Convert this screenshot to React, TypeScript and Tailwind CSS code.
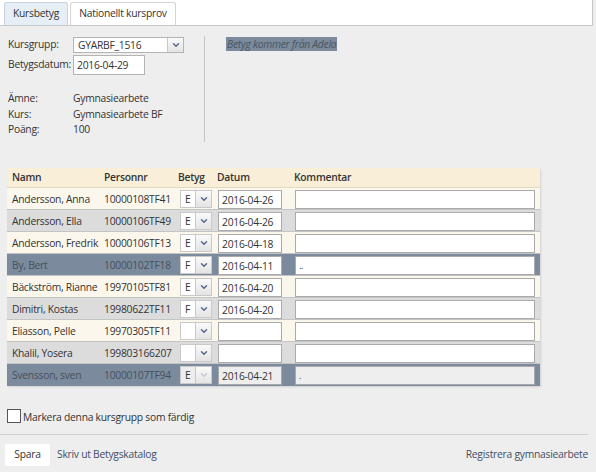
import { ChevronDown } from 'lucide-react';

type Row = {
  name: string;
  pnr: string;
  grade: string;
  date: string;
  comment: string;
  tone: 'cream' | 'gray' | 'dark' | 'locked';
};

const rows: Row[] = [
  { name: 'Andersson, Anna', pnr: '10000108TF41', grade: 'E', date: '2016-04-26', comment: '', tone: 'cream' },
  { name: 'Andersson, Ella', pnr: '10000106TF49', grade: 'E', date: '2016-04-26', comment: '', tone: 'gray' },
  { name: 'Andersson, Fredrik', pnr: '10000106TF13', grade: 'E', date: '2016-04-18', comment: '', tone: 'cream' },
  { name: 'By, Bert', pnr: '10000102TF18', grade: 'F', date: '2016-04-11', comment: '..', tone: 'dark' },
  { name: 'Bäckström, Rianne', pnr: '19970105TF81', grade: 'E', date: '2016-04-20', comment: '', tone: 'cream' },
  { name: 'Dimitri, Kostas', pnr: '19980622TF11', grade: 'F', date: '2016-04-20', comment: '', tone: 'gray' },
  { name: 'Eliasson, Pelle', pnr: '19970305TF11', grade: '', date: '', comment: '', tone: 'cream' },
  { name: 'Khalil, Yosera', pnr: '199803166207', grade: '', date: '', comment: '', tone: 'gray' },
  { name: 'Svensson, sven', pnr: '10000107TF94', grade: 'E', date: '2016-04-21', comment: '.', tone: 'locked' },
];

const rowBg = {
  cream: 'bg-[#fcf7ec] text-[#333]',
  gray: 'bg-[#dcdcdc] text-[#333]',
  dark: 'bg-[#7b8b9d] text-[#46505b]',
  locked: 'bg-[#7b8b9d] text-[#46505b]',
};

function DropButton({ disabled }: { disabled?: boolean }) {
  return (
    <div className="flex h-full w-[16px] items-center justify-center border-l border-[#c8c8c8] bg-gradient-to-b from-[#fafafa] to-[#e4e4e4]">
      <ChevronDown
        size={10}
        strokeWidth={3.5}
        className={disabled ? 'text-[#c5ccd6]' : 'text-[#56688a]'}
      />
    </div>
  );
}

function GradeSelect({ value, disabled }: { value: string; disabled?: boolean }) {
  return (
    <div
      className={`flex h-[18px] w-[32px] items-stretch border border-[#c9c9c9] ${
        disabled ? 'bg-[#eeeeee]' : 'bg-white'
      }`}
    >
      <span className="flex-1 pl-[4px] leading-[16px] text-[#333]">{value}</span>
      <DropButton disabled={disabled} />
    </div>
  );
}

export default function App() {
  return (
    <div
      className="h-[472px] w-[596px] overflow-hidden whitespace-nowrap bg-[#eeeeee] text-[10.3px] tracking-[-0.25px] text-[#333]"
      style={{ fontFamily: '"Open Sans", "Liberation Sans", sans-serif' }}
    >
      {/* Tabs */}
      <div className="flex h-[26px] w-[593px] items-end gap-[2px] border-b border-r border-[#c8c8c8] bg-white pl-[4px]">
        <div className="flex h-[23px] w-[64px] items-center justify-center rounded-t-[3px] border border-b-0 border-[#c8d2dc] bg-[#e6eef6]">
          Kursbetyg
        </div>
        <div className="flex h-[23px] w-[106px] items-center justify-center rounded-t-[3px] border border-b-0 border-[#d4d4d4] bg-white">
          Nationellt kursprov
        </div>
      </div>

      {/* Course info */}
      <div className="flex pt-[10px]">
        <div className="w-[205px] border-r border-[#c4c4c4] pb-[4px] pl-[8px]">
          <div className="flex h-[17px] items-center">
            <span className="w-[65px]">Kursgrupp:</span>
            <div className="flex h-[16px] w-[111px] items-stretch border border-[#b4b4b4] bg-white">
              <span className="flex-1 pl-[4px] leading-[14px]">GYARBF_1516</span>
              <DropButton />
            </div>
          </div>
          <div className="mt-[2px] flex h-[20px] items-center">
            <span className="w-[65px]">Betygsdatum:</span>
            <div className="h-[20px] w-[72px] border border-[#b4b4b4] bg-white pl-[3px] leading-[18px]">
              2016-04-29
            </div>
          </div>
          <div className="mt-[16px] flex flex-col leading-[15.5px]">
            <div className="flex">
              <span className="w-[65px]">Ämne:</span>
              <span>Gymnasiearbete</span>
            </div>
            <div className="flex">
              <span className="w-[65px]">Kurs:</span>
              <span>Gymnasiearbete BF</span>
            </div>
            <div className="flex">
              <span className="w-[65px]">Poäng:</span>
              <span>100</span>
            </div>
          </div>
        </div>
        <div className="pl-[21px] pt-[1px]">
          <span className="bg-[#7b8b9d] px-[1px] italic text-[#4a5561]">Betyg kommer från Adela</span>
        </div>
      </div>

      {/* Grades table */}
      <div className="ml-[7px] mt-[26px] w-[533px] bg-[#fcf7ec] shadow-[1px_1px_2px_rgba(0,0,0,0.12)]">
        <table className="w-[533px] table-fixed border-collapse">
          <colgroup>
            <col className="w-[92px]" />
            <col className="w-[76px]" />
            <col className="w-[39px]" />
            <col className="w-[76px]" />
            <col className="w-[250px]" />
          </colgroup>
          <thead>
            <tr className="h-[20px] border-b border-[#e3d8c0] bg-[#f9efd9] text-left text-[#333]">
              <th className="pl-[5px] font-semibold">Namn</th>
              <th className="pl-[5px] font-semibold">Personnr</th>
              <th className="pl-[3px] font-semibold">Betyg</th>
              <th className="pl-[3px] font-semibold">Datum</th>
              <th className="pl-[4px] font-semibold">Kommentar</th>
            </tr>
          </thead>
          <tbody>
            {rows.map((r) => {
              const locked = r.tone === 'locked';
              return (
                <tr key={r.pnr} className={`h-[22px] border-t border-[#c4c4c4] ${rowBg[r.tone]}`}>
                  <td className="pl-[5px] align-middle leading-[14px]">{r.name}</td>
                  <td className="pl-[5px] align-middle leading-[14px]">{r.pnr}</td>
                  <td className="pl-[5px] align-middle">
                    <GradeSelect value={r.grade} disabled={locked} />
                  </td>
                  <td className="pl-[4px] align-middle">
                    <div
                      className={`mt-[1px] h-[19px] w-[64px] border border-[#aaaaaa] pl-[3px] leading-[18px] text-[#333] ${
                        locked ? 'bg-[#eeeeee]' : 'bg-white'
                      }`}
                    >
                      {r.date}
                    </div>
                  </td>
                  <td className="pl-[5px] pr-[5px] align-middle">
                    <div
                      className={`mt-[1px] h-[19px] w-[240px] border border-[#aaaaaa] pl-[3px] text-[9px] leading-[18px] text-[#333] ${
                        locked ? 'bg-[#eeeeee]' : 'bg-white'
                      }`}
                    >
                      {r.comment}
                    </div>
                  </td>
                </tr>
              );
            })}
          </tbody>
        </table>
      </div>

      {/* Done checkbox */}
      <label className="mt-[21px] flex items-center pl-[7px]">
        <span className="h-[14px] w-[14px] border border-[#555] bg-white" />
        <span className="ml-[2px] mt-[3px]">Markera denna kursgrupp som färdig</span>
      </label>

      {/* Footer */}
      <div className="mt-[9px] w-[588px] border-t border-[#cfcfcf]" />
      <div className="flex w-[588px] items-center pl-[5px] pt-[9px]">
        <button className="h-[22px] w-[45px] rounded-[2px] bg-white text-[10.3px] text-[#333]">Spara</button>
        <a className="ml-[7px] text-[#3f4f67]">Skriv ut Betygskatalog</a>
        <a className="ml-auto text-[#3f4f67]">Registrera gymnasiearbete</a>
      </div>
    </div>
  );
}
